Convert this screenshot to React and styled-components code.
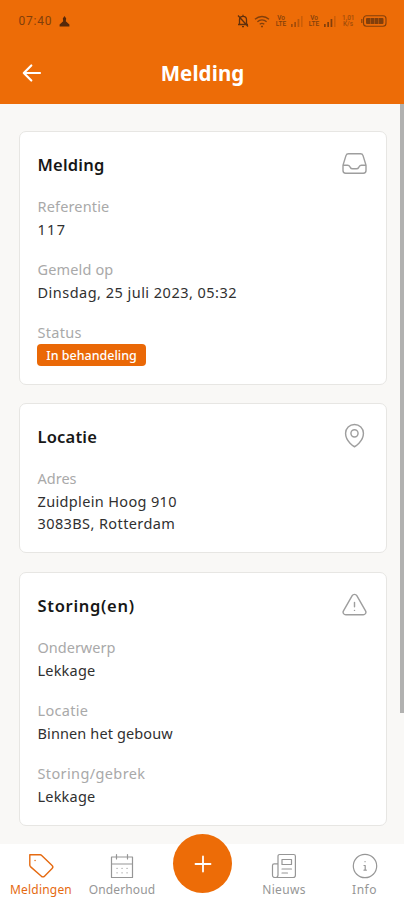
import React from "react";
import styled, { createGlobalStyle } from "styled-components";

const GlobalStyle = createGlobalStyle`
  * { box-sizing: border-box; }
  body { margin: 0; background: #f9f8f6; font-family: "Noto Sans", sans-serif; }
`;

const Screen = styled.div`
  width: 404px;
  height: 900px;
  display: flex;
  flex-direction: column;
  overflow: hidden;
  position: relative;
  background: #f9f8f6;
`;

const StatusBar = styled.div`
  height: 42px;
  flex: none;
  display: flex;
  align-items: center;
  justify-content: space-between;
  padding: 0 17px 0 18.5px;
  background: #ed6c07;
  color: #823f0b;
`;

const Clock = styled.div`
  display: flex;
  align-items: center;
  gap: 7px;
  font: 12px/16px Roboto, sans-serif;
  letter-spacing: 0.75px;
`;

const StatusIcons = styled.div`
  display: flex;
  align-items: center;
`;

const NetLabel = styled.div`
  width: 12px;
  margin-right: ${(p) => p.$gap}px;
  font: 500 6.5px/6px Roboto, sans-serif;
  text-align: center;
  opacity: ${(p) => (p.$dim ? 0.7 : 1)};
`;

const StatusGlyph = styled.svg`
  display: block;
  flex: none;
  margin-right: ${(p) => p.$gap || 0}px;
`;

const Header = styled.header`
  height: 62px;
  flex: none;
  display: grid;
  grid-template-columns: 65px 1fr 64px;
  align-items: center;
  background: #ed6c07;
  color: #fff;
`;

const BackButton = styled.button`
  display: flex;
  border: 0;
  padding: 0 0 0 22px;
  background: none;
  color: inherit;
`;

const Title = styled.h1`
  margin: 0;
  text-align: center;
  font-size: 20.5px;
  line-height: 30px;
  font-weight: 700;
  letter-spacing: 0.1px;
`;

const Content = styled.main`
  height: 740px;
  flex: none;
  display: flex;
  flex-direction: column;
  gap: 18.75px;
  padding: 27px 17.5px 0 18.5px;
  overflow: hidden;
`;

const CardBox = styled.section`
  flex: none;
  padding: 17.5px 19px 17.5px 18px;
  border: 1px solid #e7e6e3;
  border-radius: 7px;
  background: #fff;
`;

const CardHeader = styled.div`
  height: 30px;
  display: flex;
  align-items: center;
  justify-content: space-between;
  margin-bottom: 15.5px;
  color: #9e9e9e;
`;

const CardTitle = styled.h2`
  margin: 0;
  color: #171717;
  font-size: 16.5px;
  line-height: 29px;
  font-weight: 600;
  letter-spacing: ${(p) => p.$spacing}px;
`;

const Fields = styled.div`
  display: flex;
  flex-direction: column;
  gap: 18px;
`;

const Label = styled.div`
  color: #a9a9a9;
  font-size: 14.5px;
  line-height: 22.5px;
  letter-spacing: ${(p) => p.$spacing || 0}px;
`;

const Value = styled.div`
  color: #303030;
  font-size: 14.5px;
  line-height: 22.5px;
  letter-spacing: ${(p) => p.$spacing || 0}px;
`;

const Badge = styled.div`
  width: 109px;
  height: 22.5px;
  margin-left: -0.5px;
  border-radius: 4px;
  background: #ea6806;
  color: #fff;
  font-size: 12.5px;
  line-height: 23px;
  font-weight: 500;
  text-align: center;
`;

const ScrollThumb = styled.div`
  position: absolute;
  top: 104px;
  right: 0;
  width: 4px;
  height: 609px;
  background: #b1b1b0;
`;

const Nav = styled.nav`
  height: 56px;
  flex: none;
  display: grid;
  grid-template-columns: 82px 80px 81px 82px 79px;
  background: #fff;
`;

const NavItem = styled.a`
  display: flex;
  flex-direction: column;
  align-items: center;
  padding-top: 8px;
  color: ${(p) => (p.$active ? "#e56a11" : "#969696")};
`;

const NavLabel = styled.span`
  font-size: 12px;
  line-height: 18px;
  margin-top: 1px;
  white-space: nowrap;
  letter-spacing: ${(p) => p.$spacing}px;
`;

const AddButton = styled.button`
  width: 59px;
  height: 59px;
  margin-top: -10px;
  justify-self: center;
  display: flex;
  align-items: center;
  justify-content: center;
  border: 0;
  padding: 0;
  border-radius: 50%;
  background: #ed6c07;
  color: #fff;
`;

const Outline = styled.svg`
  display: block;
  flex: none;
  fill: none;
  stroke: currentColor;
  stroke-width: ${(p) => p.$weight || 1.2};
  stroke-linecap: round;
  stroke-linejoin: round;
`;

const CardOutline = styled(Outline)`
  margin-bottom: 2px;
`;

const icons = {
  inbox: (
    <path d="M2.25 13.5h3.86a2.25 2.25 0 0 1 2.012 1.244l.256.512a2.25 2.25 0 0 0 2.013 1.244h3.218a2.25 2.25 0 0 0 2.013-1.244l.256-.512a2.25 2.25 0 0 1 2.013-1.244h3.859m-19.5.338V18a2.25 2.25 0 0 0 2.25 2.25h15A2.25 2.25 0 0 0 21.75 18v-4.162c0-.224-.034-.447-.1-.661L19.24 5.338a2.25 2.25 0 0 0-2.15-1.588H6.911a2.25 2.25 0 0 0-2.15 1.588L2.35 13.177a2.25 2.25 0 0 0-.1.661Z" />
  ),
  pin: (
    <>
      <path d="M15 10.5a3 3 0 1 1-6 0 3 3 0 0 1 6 0Z" />
      <path d="M19.5 10.5c0 7.142-7.5 11.25-7.5 11.25S4.5 17.642 4.5 10.5a7.5 7.5 0 1 1 15 0Z" />
    </>
  ),
  warning: (
    <path d="M12 9v3.75m-9.303 3.376c-.866 1.5.217 3.374 1.948 3.374h14.71c1.73 0 2.813-1.874 1.948-3.374L13.949 3.378c-.866-1.5-3.032-1.5-3.898 0L2.697 16.126ZM12 15.75h.007v.008H12v-.008Z" />
  ),
};

const views = {
  inbox: [25, 21, "1.5 3.1 21 17.8"],
  pin: [25, 25, "1.5 1.8 21 21"],
  warning: [25, 23, "1.5 1.1 21 19.4"],
};

function CardIcon({ name }) {
  const [w, h, box] = views[name];
  return (
    <CardOutline width={w} height={h} viewBox={box}>
      {icons[name]}
    </CardOutline>
  );
}

function Card({ title, icon, spacing, children }) {
  return (
    <CardBox>
      <CardHeader>
        <CardTitle $spacing={spacing}>{title}</CardTitle>
        <CardIcon name={icon} />
      </CardHeader>
      <Fields>{children}</Fields>
    </CardBox>
  );
}

function Field({ label, spacing, children }) {
  return (
    <div>
      <Label $spacing={spacing}>{label}</Label>
      {children}
    </div>
  );
}

function Signal({ gap, bars }) {
  return (
    <StatusGlyph width="12" height="12" viewBox="0 0 12 12" $gap={gap} fill="currentColor">
      <path d="M0 9h1.7v3H0zM3.3 7H5v5H3.3z" opacity={bars > 2 ? 1 : 0.7} />
      <path d="M6.6 4h1.7v8H6.6z" opacity={bars > 2 ? 1 : 0.5} />
      <path d="M10 1h1.6v11H10z" opacity="0.3" />
    </StatusGlyph>
  );
}

export default function App() {
  return (
    <>
      <GlobalStyle />
      <Screen>
        <StatusBar>
          <Clock>
            07:40
            <StatusGlyph width="11" height="11" viewBox="0 0 11 11" fill="#57290a">
              <path d="M5.5 0 7.2 2.4 6.8 5.2 10.4 8.4V10.4H.6V8.4L4.2 5.2 3.8 2.4z" />
            </StatusGlyph>
          </Clock>
          <StatusIcons>
            <StatusGlyph width="12" height="14" viewBox="0 0 12 14" $gap="5" fill="none" stroke="#60300d" strokeWidth="1.3">
              <path d="M2.5 10V5.8C2.5 3.7 4 2.3 6 2.3s3.5 1.4 3.5 3.5V10M1 10.5h10M5 12.7h2M6 .8v1.5M1 1.5l10 11" />
            </StatusGlyph>
            <StatusGlyph width="16" height="13" viewBox="0 0 16 13" $gap="5" fill="none" stroke="currentColor" strokeWidth="1.3">
              <path d="M1 4.2c4-3.6 10-3.6 14 0M3.4 6.8c2.7-2.4 6.5-2.4 9.2 0M5.7 9.3c1.5-1.2 3.1-1.2 4.6 0M7 11.5h2" />
            </StatusGlyph>
            <NetLabel $gap={4}>Vo LTE</NetLabel>
            <Signal gap={5} bars={2} />
            <NetLabel $gap={4}>Vo LTE</NetLabel>
            <Signal gap={6} bars={3} />
            <NetLabel $gap={7} $dim>1,01 K/s</NetLabel>
            <StatusGlyph width="26" height="12" viewBox="0 0 26 12" fill="none" stroke="currentColor" strokeWidth="1.1">
              <rect x="2.5" y="0.7" width="22.5" height="10.6" rx="3" />
              <path d="M.8 4v4" />
              <rect x="5" y="3" width="17.5" height="6" rx="1" fill="currentColor" stroke="none" />
              <path d="M9.5 3v6M13.5 3v6M17.5 3v6" stroke="#ba570a" strokeWidth=".8" />
            </StatusGlyph>
          </StatusIcons>
        </StatusBar>
        <Header>
          <BackButton aria-label="Terug">
            <Outline width="20" height="20" viewBox="0 0 20 20" $weight={2.2}>
              <path d="M18 10H2.3M9.3 2.5 1.8 10l7.5 7.5" />
            </Outline>
          </BackButton>
          <Title>Melding</Title>
        </Header>
        <Content>
          <Card title="Melding" icon="inbox" spacing={0.2}>
            <Field label="Referentie" spacing={0.15}>
              <Value $spacing={1.3}>117</Value>
            </Field>
            <Field label="Gemeld op" spacing={0.15}>
              <Value $spacing={0.48}>Dinsdag, 25 juli 2023, 05:32</Value>
            </Field>
            <Field label="Status" spacing={0.3}>
              <Badge>In behandeling</Badge>
            </Field>
          </Card>
          <Card title="Locatie" icon="pin" spacing={0.2}>
            <Field label="Adres">
              <Value $spacing={0.35}>Zuidplein Hoog 910</Value>
              <Value $spacing={0.4}>3083BS, Rotterdam</Value>
            </Field>
          </Card>
          <Card title="Storing(en)" icon="warning" spacing={0.7}>
            <Field label="Onderwerp">
              <Value $spacing={0.2}>Lekkage</Value>
            </Field>
            <Field label="Locatie" spacing={0.3}>
              <Value $spacing={0.12}>Binnen het gebouw</Value>
            </Field>
            <Field label="Storing/gebrek" spacing={0.38}>
              <Value $spacing={0.2}>Lekkage</Value>
            </Field>
          </Card>
        </Content>
        <Nav>
          <NavItem $active>
            <Outline width="28" height="28" viewBox="0 0 28 28" $weight={1.4}>
              <path d="M2.8 2.8h10.4c.6 0 1.1.2 1.5.6l10.4 10.1c.9.9.9 2.2 0 3.1l-7.6 7.6c-.9.9-2.3.9-3.1 0L3.4 14.6c-.4-.4-.6-.9-.6-1.5z" />
              <path d="M8 8.5h.1" />
            </Outline>
            <NavLabel $spacing={0.2}>Meldingen</NavLabel>
          </NavItem>
          <NavItem>
            <Outline width="28" height="28" viewBox="0 0 28 28" $weight={1.2}>
              <path d="M3.5 5h21v20.5h-21zM3.5 12h21M8.5 2.5V7M19.5 2.5V7" />
              <path d="M9 16.3h.1M14 16.3h.1M19 16.3h.1M9 20.8h.1M14 20.8h.1M19 20.8h.1" />
            </Outline>
            <NavLabel $spacing={0.1}>Onderhoud</NavLabel>
          </NavItem>
          <AddButton aria-label="Nieuwe melding">
            <Outline width="18" height="18" viewBox="0 0 18 18" $weight={1.8}>
              <path d="M9 1.5v15M1.5 9h15" />
            </Outline>
          </AddButton>
          <NavItem>
            <Outline width="28" height="28" viewBox="0 0 28 28" $weight={1.2}>
              <path d="M8 23V4.2c0-1 .7-1.7 1.7-1.7h14c1 0 1.7.7 1.7 1.7v19.1c0 1.2-1 2.2-2.2 2.2H4.8c-1.3 0-2.3-1-2.3-2.3V13.5c0-1 .7-1.7 1.7-1.7H8M8 23c0 1.4-.9 2.5-2.3 2.5" />
              <path d="M12 7.5h9.5v5H12zM12 17h9.5M12 21h5.5" />
            </Outline>
            <NavLabel $spacing={0.3}>Nieuws</NavLabel>
          </NavItem>
          <NavItem>
            <Outline width="28" height="28" viewBox="0 0 28 28" $weight={1.2}>
              <circle cx="14" cy="14" r="11.7" />
              <path d="M14 9.7h.1M13 13.5h1.2v4.6M13 18.2h2.3" />
            </Outline>
            <NavLabel $spacing={0.5}>Info</NavLabel>
          </NavItem>
        </Nav>
        <ScrollThumb />
      </Screen>
    </>
  );
}
